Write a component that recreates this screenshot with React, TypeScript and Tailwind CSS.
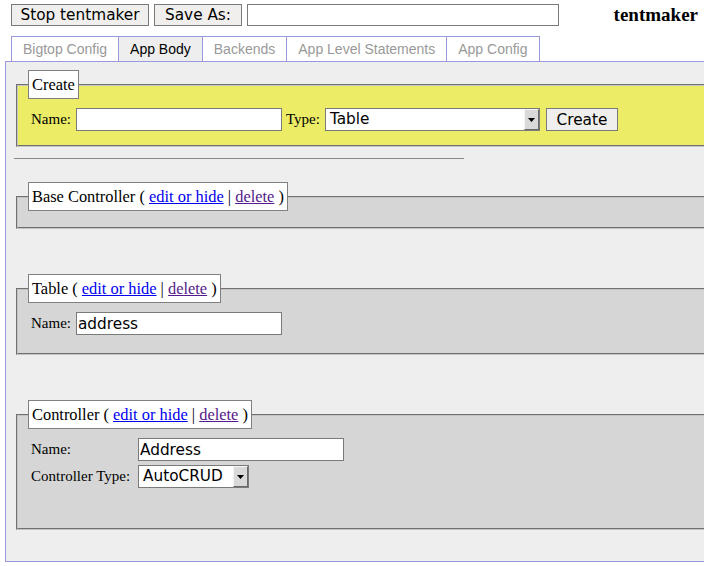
import React from "react";

function FakeSelect({ value, className }: { value: string; className: string }) {
  return (
    <div
      className={`flex h-[23px] items-stretch border border-[#7a7a7a] bg-white font-['DejaVu_Sans',sans-serif] text-[15.3px] leading-[21px] text-black ${className}`}
    >
      <span className="pl-[4px] pr-[4px]">{value}</span>
      <div className="ml-auto flex w-[15px] items-center justify-center border-t border-l border-r border-b border-t-[#f5f5f5] border-l-[#f5f5f5] border-r-[#6a6a6a] border-b-[#6a6a6a] bg-[#d9d9d9]">
        <svg width="7" height="4" viewBox="0 0 7 4">
          <path d="M0 0H7L3.5 4Z" fill="#000" />
        </svg>
      </div>
    </div>
  );
}

function TextBox({ value, className }: { value: string; className: string }) {
  return (
    <input
      readOnly
      defaultValue={value}
      className={`h-[23px] border border-[#7a7a7a] bg-white px-[1px] font-['DejaVu_Sans',sans-serif] text-[15.3px] text-black outline-none ${className}`}
    />
  );
}

function Legend({ children }: { children: React.ReactNode }) {
  return (
    <legend className="border border-[#808080] bg-white px-[3px] py-[4px] font-['Liberation_Serif',serif] text-[16.4px] leading-[19px] text-black">
      {children}
    </legend>
  );
}

function ItemLegend({ name }: { name: string }) {
  return (
    <Legend>
      {name} ({" "}
      <a href="#" className="text-[#0000ee] underline">
        edit or hide
      </a>{" "}
      |{" "}
      <a href="#" className="text-[#551a8b] underline">
        delete
      </a>{" "}
      )
    </Legend>
  );
}

const tabs = ["Bigtop Config", "App Body", "Backends", "App Level Statements", "App Config"];

export default function App() {
  return (
    <div className="h-[566px] w-[704px] overflow-hidden bg-white pt-[4px]">
      {/* top bar */}
      <div className="flex h-[22px] items-stretch pl-[11px] pr-[6px]">
        <button className="w-[138px] border border-[#7a7a7a] bg-[#f0efed] font-['DejaVu_Sans',sans-serif] text-[15.3px] leading-[20px] text-black">
          Stop tentmaker
        </button>
        <button className="ml-[5px] w-[88px] border border-[#7a7a7a] bg-[#f0efed] font-['DejaVu_Sans',sans-serif] text-[15.3px] leading-[20px] text-black">
          Save As:
        </button>
        <input
          readOnly
          className="ml-[5px] w-[312px] border border-[#7a7a7a] bg-white outline-none"
        />
        <div className="ml-auto self-center font-['Liberation_Serif',serif] text-[19px] font-bold leading-[22px] text-black">
          tentmaker
        </div>
      </div>

      {/* tabs */}
      <div className="ml-[11px] mt-[10px] flex font-['Liberation_Sans',sans-serif] text-[14px] leading-[16px]">
        {tabs.map((t, i) => (
          <div
            key={t}
            className={`border-t border-l border-[#9999dd] px-[11px] py-[4px] ${
              t === "App Body" ? "bg-[#eeeeee] text-black" : "bg-white text-[#999999]"
            } ${i === tabs.length - 1 ? "border-r" : ""}`}
          >
            {t}
          </div>
        ))}
      </div>

      {/* panel */}
      <div className="ml-[5px] w-[760px] border border-[#9999dd] bg-[#eeeeee] px-[8px] pt-[8px] pb-[31px]">
        <fieldset className="mx-[2px] min-w-0 border-2 border-[#c4c4c4] bg-[#ecec66] px-[10px] pt-[9px] pb-[14px] [border-style:groove]">
          <Legend>Create</Legend>
          <div className="ml-[3px] flex items-center font-['Liberation_Serif',serif] text-[15px] text-black">
            <span>Name:</span>
            <TextBox value="" className="ml-[5px] w-[206px]" />
            <span className="ml-[4px]">Type:</span>
            <FakeSelect value="Table" className="ml-[5px] w-[215px]" />
            <button className="ml-[6px] h-[23px] w-[72px] border border-[#7a7a7a] bg-[#f0efed] font-['DejaVu_Sans',sans-serif] text-[15.3px] leading-[20px] text-black">
              Create
            </button>
          </div>
        </fieldset>

        <div className="mt-[11px] h-0 w-[450px] border-t border-[#888888]" />

        <fieldset className="mx-[2px] mt-[23px] min-w-0 border-2 border-[#c4c4c4] bg-[#d6d6d6] px-[10px] pt-[9px] pb-[7px] [border-style:groove]">
          <ItemLegend name="Base Controller" />
        </fieldset>

        <fieldset className="mx-[2px] mt-[45px] min-w-0 border-2 border-[#c4c4c4] bg-[#d6d6d6] px-[10px] pt-[9px] pb-[18px] [border-style:groove]">
          <ItemLegend name="Table" />
          <div className="ml-[3px] flex items-center font-['Liberation_Serif',serif] text-[15px] text-black">
            <span>Name:</span>
            <TextBox value="address" className="ml-[5px] w-[206px]" />
          </div>
        </fieldset>

        <fieldset className="mx-[2px] mt-[45px] min-w-0 border-2 border-[#c4c4c4] bg-[#d6d6d6] px-[10px] pt-[9px] pb-[40px] [border-style:groove]">
          <ItemLegend name="Controller" />
          <div className="ml-[3px] grid grid-cols-[103px_auto] items-center gap-x-[4px] gap-y-[4px] font-['Liberation_Serif',serif] text-[15px] text-black">
            <span>Name:</span>
            <div>
              <TextBox value="Address" className="w-[206px]" />
            </div>
            <span>Controller Type:</span>
            <div>
              <FakeSelect value="AutoCRUD" className="w-[111px]" />
            </div>
          </div>
        </fieldset>
      </div>
    </div>
  );
}
